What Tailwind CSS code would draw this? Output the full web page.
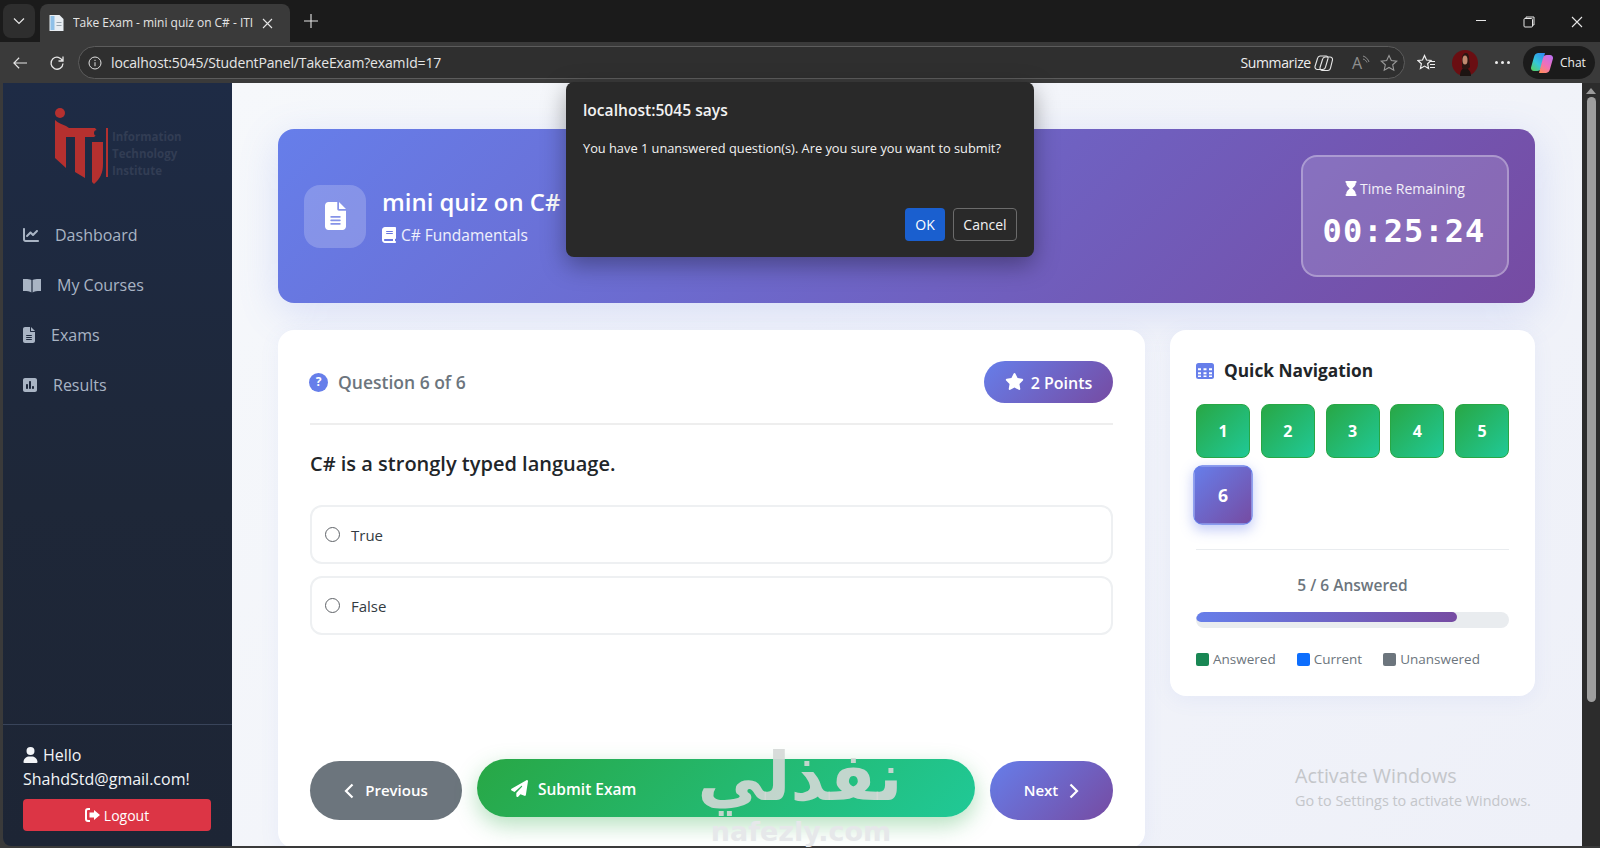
<!DOCTYPE html>
<html lang="en">
<head>
  <meta charset="UTF-8" />
  <title>Take Exam - mini quiz on C# - ITI</title>
  <script src="https://cdn.jsdelivr.net/npm/@tailwindcss/browser@4"></script>
</head>
<body class="h-[848px] w-[1600px] overflow-hidden bg-[#3a3a3a] font-['Open_Sans','Noto_Sans',sans-serif]">
<div class="relative flex h-[848px] flex-col">

  <!-- tab strip -->
  <div class="flex h-[42px] shrink-0 items-end bg-[#1b1b1b] text-[#e6e6e6]">
    <div class="mb-[4px] ml-[3px] flex h-[34px] w-[32px] items-center justify-center rounded-lg bg-[#2e2e2e]">
      <svg width="14" height="14" viewBox="0 0 14 14" fill="none" stroke="#e6e6e6" stroke-width="1.2"><path d="M2 4.500l5 5 5-5"/></svg>
    </div>
    <div class="ml-[5px] flex h-[38px] w-[250px] items-center rounded-t-lg bg-[#3a3a3a] pl-[8px]">
      <svg width="17" height="18" viewBox="0 0 16 18"><path d="M1 1h10l4 4v12H1z" fill="#e8edf2"/><path d="M2 2h4v14H2z" fill="#8fc0e8"/><path d="M8 8h5v1H8zM8 11h5v1H8z" fill="#9aa6b0"/></svg>
      <span class="ml-[8px] w-[186px] truncate text-[12px] tracking-[-0.02px] text-[#e4e4e4]">Take Exam - mini quiz on C# - ITI</span>
      <svg class="ml-[3px]" width="11" height="11" viewBox="0 0 11 11" stroke="#e6e6e6" stroke-width="1.100"><path d="M1 1l9 9M10 1l-9 9"/></svg>
    </div>
    <svg class="mb-[13px] ml-[13px]" width="16" height="16" viewBox="0 0 16 16" stroke="#e6e6e6" stroke-width="1.100"><path d="M8 1v14M1 8h14"/></svg>
    <div class="mb-[14px] ml-auto flex items-center">
      <svg width="12" height="12" viewBox="0 0 12 12" stroke="#e6e6e6" stroke-width="1"><path d="M1 4.500h10"/></svg>
      <svg class="ml-[36px]" width="12" height="12" viewBox="0 0 12 12" fill="none" stroke="#e6e6e6" stroke-width="1"><rect x="1" y="2.500" width="8.500" height="8.500" rx="1"/><path d="M3 2.500V1h8v8H9.500"/></svg>
      <svg class="ml-[36px] mr-[17px]" width="12" height="12" viewBox="0 0 12 12" stroke="#e6e6e6" stroke-width="1.100"><path d="M1 1l10 10M11 1L1 11"/></svg>
    </div>
  </div>

  <!-- toolbar -->
  <div class="flex h-[41px] shrink-0 items-center bg-[#3a3a3a] text-[#e6e6e6]">
    <svg class="ml-[12px]" width="16" height="14" viewBox="0 0 18 16" fill="none" stroke="#e6e6e6" stroke-width="1.300"><path d="M17 8H2M8 2L2 8l6 6"/></svg>
    <svg class="ml-[21px]" width="16" height="16" viewBox="0 0 16 16" fill="none" stroke="#e6e6e6" stroke-width="1.300"><path d="M13.600 6A6 6 0 1 0 14 8.500M14 1.500V6H9.500"/></svg>
    <div class="ml-[13px] flex h-[33px] w-[1327px] items-center rounded-full border border-[#5c5c5c] bg-[#2f2f2f] pl-[9px]">
      <svg width="14" height="14" viewBox="0 0 14 14" fill="none" stroke="#e0e0e0" stroke-width="1"><circle cx="7" cy="7" r="6"/><path d="M7 6.200v4M7 3.800v1.200"/></svg>
      <span class="ml-[9px] text-[14px] tracking-[-0.15px] text-[#e6e6e6]">localhost:5045/StudentPanel/TakeExam?examId=17</span>
      <span class="ml-auto text-[14px] tracking-[-0.35px] text-[#eeeeee]">Summarize</span>
      <svg class="ml-[3px]" width="20" height="18" viewBox="0 0 20 18" fill="none" stroke="#e6e6e6" stroke-width="1.100"><path d="M6 2h6a2 2 0 0 1 2 2.500L11.500 13a3 3 0 0 1-3 2.500H3.500a2.500 2.500 0 0 1-2.500-3L3.500 4.500A3 3 0 0 1 6 2z"/><path d="M11 3h5a2.500 2.500 0 0 1 2.500 3L16.500 14a3 3 0 0 1-3 2.500H8.500a2.500 2.500 0 0 1-2.500-3L8.500 5.500A3 3 0 0 1 11 3z"/></svg>
      <span class="ml-[18px] flex items-start text-[16px] leading-none text-[#8e8e8e]">A<svg width="8" height="10" viewBox="0 0 8 10" fill="none" stroke="#8e8e8e"><path d="M1 1c3 1 5 3 6 6M1 4c2 .5 3 1.500 4 3.500"/></svg></span>
      <svg class="ml-[10px] mr-[6px]" width="18" height="18" viewBox="0 0 18 18" fill="none" stroke="#9a9a9a" stroke-width="1.100"><path d="M9 1.500l2.300 5 5.400.6-4 3.700 1.100 5.400L9 13.500l-4.800 2.700 1.100-5.400-4-3.700 5.400-.6z"/></svg>
    </div>
    <svg class="ml-[12px]" width="19" height="18" viewBox="0 0 19 18" fill="none" stroke="#eeeeee" stroke-width="1.200"><path d="M7.500 1.500l2 4.500 4.500.5-3.400 3.200 1 4.800-4.100-2.400-4.100 2.400 1-4.800L1 6.500 5.500 6zM13 7.500h5M13 10.500h5M13 13.500h5"/></svg>
    <svg class="ml-[16px]" width="26" height="26" viewBox="0 0 26 26">
      <circle cx="13" cy="13" r="13" fill="#6a0e12"/>
      <path d="M8 26c0-5 2-8 5-8s6 3 6 8z" fill="#1c1412"/>
      <path d="M10 8c0-3 2-5 4-5s3 2 3 5l1 9c-2 3-6 3-8 1z" fill="#2a1512"/>
      <ellipse cx="13" cy="10" rx="2.500" ry="4.500" fill="#c08a70"/>
    </svg>
    <div class="ml-[17px] flex gap-[3px]">
      <span class="h-[3px] w-[3px] rounded-full bg-[#eeeeee]"></span><span class="h-[3px] w-[3px] rounded-full bg-[#eeeeee]"></span><span class="h-[3px] w-[3px] rounded-full bg-[#eeeeee]"></span>
    </div>
    <div class="ml-[13px] flex h-[33px] w-[72px] items-center rounded-full bg-[#1b1b1b] pl-[7px]">
      <svg width="24" height="24" viewBox="0 0 24 24">
        <defs>
          <linearGradient id="cpa" x1="0.8" y1="0" x2="0.1" y2="1"><stop offset="0" stop-color="#2f8ff0"/><stop offset="0.55" stop-color="#35c8d8"/><stop offset="1" stop-color="#58d060"/></linearGradient>
          <linearGradient id="cpb" x1="0.8" y1="0" x2="0.2" y2="1"><stop offset="0" stop-color="#c070f0"/><stop offset="0.55" stop-color="#f070b8"/><stop offset="1" stop-color="#ff8a60"/></linearGradient>
        </defs>
        <path d="M8 2h7l-4 15a4 4 0 0 1-4 3H4a3 3 0 0 1-3-3.500L4 6a5 5 0 0 1 4-4z" fill="url(#cpa)"/>
        <path d="M16 22H9l4-15a4 4 0 0 1 4-3h3a3 3 0 0 1 3 3.500L20 18a5 5 0 0 1-4 4z" fill="url(#cpb)"/>
      </svg>
      <span class="ml-[6px] text-[12px] text-[#eeeeee]">Chat</span>
    </div>
  </div>

  <!-- page -->
  <div class="flex h-[763px] shrink-0 pl-[3px]">

    <aside class="flex w-[229px] shrink-0 flex-col rounded-bl-lg bg-[linear-gradient(180deg,#1e2b45_0%,#1e2738_55%,#1d2535_100%)]">
      <div class="flex h-[115px] shrink-0 items-start pl-[47px] pt-[25px]">
        <svg width="60" height="77" viewBox="0 0 60 77" fill="#b5302f">
          <circle cx="10" cy="5" r="5"/>
          <path d="M5 12c3 3 7 4 11 6l3 2h26l4 5-5 4H35l0 41-10-6V29h-9v31L5 50z"/>
          <circle cx="47" cy="25" r="3" fill="#1e2a42"/>
          <path d="M42 34h11v22c0 9-3 15-9 20l-2-2z"/>
          <rect x="56" y="20" width="2" height="49"/>
        </svg>
        <div class="ml-[2px] mt-[20px] text-[11.500px] font-bold leading-[17px] text-[#323d54]">Information<br/>Technology<br/>Institute</div>
      </div>
      <nav class="mt-[12px] flex flex-col text-[16px] text-[#a9b4c4]">
        <a class="flex h-[50px] items-center pl-[20px]">
          <svg width="16" height="16" viewBox="0 0 512 512" fill="#a9b4c4"><path d="M64 64c0-17.700-14.300-32-32-32S0 46.300 0 64V400c0 44.200 35.800 80 80 80H480c17.700 0 32-14.300 32-32s-14.300-32-32-32H80c-8.800 0-16-7.200-16-16V64zm406.600 86.600c12.500-12.500 12.500-32.800 0-45.300s-32.800-12.500-45.300 0L320 210.700l-57.400-57.400c-12.500-12.500-32.800-12.500-45.300 0l-112 112c-12.500 12.500-12.500 32.800 0 45.300s32.800 12.500 45.300 0L240 221.300l57.400 57.400c12.500 12.500 32.800 12.500 45.300 0l128-128z"/></svg>
          <span class="ml-[16px]">Dashboard</span>
        </a>
        <a class="flex h-[50px] items-center pl-[20px]">
          <svg width="18" height="17" viewBox="0 0 18 16" fill="#a9b4c4"><path d="M8.400 2.600v12.400C6.500 13.800 3.500 13.400 0 13.500V1.500c3.500-.2 6.500 0 8.400 1.100zM9.600 2.600v12.400c1.900-1.200 4.900-1.600 8.400-1.500V1.500c-3.500-.2-6.500 0-8.400 1.100z"/></svg>
          <span class="ml-[16px]">My Courses</span>
        </a>
        <a class="flex h-[50px] items-center pl-[20px]">
          <svg width="12" height="16" viewBox="0 0 384 512" fill="#a9b4c4"><path d="M64 0C28.700 0 0 28.700 0 64V448c0 35.300 28.700 64 64 64H320c35.300 0 64-28.700 64-64V160H256c-17.700 0-32-14.300-32-32V0H64zM256 0V128H384L256 0zM112 256H272c8.800 0 16 7.200 16 16s-7.200 16-16 16H112c-8.800 0-16-7.200-16-16s7.200-16 16-16zm0 64H272c8.800 0 16 7.200 16 16s-7.200 16-16 16H112c-8.800 0-16-7.200-16-16s7.200-16 16-16zm0 64H272c8.800 0 16 7.200 16 16s-7.200 16-16 16H112c-8.800 0-16-7.200-16-16s7.200-16 16-16z"/></svg>
          <span class="ml-[16px]">Exams</span>
        </a>
        <a class="flex h-[50px] items-center pl-[20px]">
          <svg width="14" height="16" viewBox="0 0 448 512" fill="#a9b4c4"><path d="M64 32C28.700 32 0 60.700 0 96V416c0 35.300 28.700 64 64 64H384c35.300 0 64-28.700 64-64V96c0-35.300-28.700-64-64-64H64zm64 192c17.700 0 32 14.300 32 32v96c0 17.700-14.300 32-32 32s-32-14.300-32-32V256c0-17.700 14.300-32 32-32zm64-64c0-17.700 14.300-32 32-32s32 14.300 32 32V352c0 17.700-14.300 32-32 32s-32-14.300-32-32V160zM320 288c17.700 0 32 14.300 32 32v32c0 17.700-14.300 32-32 32s-32-14.300-32-32V320c0-17.700 14.300-32 32-32z"/></svg>
          <span class="ml-[16px]">Results</span>
        </a>
      </nav>
      <div class="mt-auto h-[122px] border-t border-[#39445a] pl-[20px] pr-[20px] pt-[17px] text-[16px] text-[#f2f4f7]">
        <div class="flex h-[25px] items-center">
          <svg width="15" height="16" viewBox="0 0 448 512" fill="#f2f4f7"><path d="M224 256A128 128 0 1 0 224 0a128 128 0 1 0 0 256zm-45.700 48C79.800 304 0 383.800 0 482.300C0 498.700 13.300 512 29.700 512H418.300c16.400 0 29.700-13.300 29.700-29.700C448 383.800 368.200 304 269.700 304H178.300z"/></svg>
          <span class="ml-[5px]">Hello</span>
        </div>
        <div class="h-[25px] leading-[25px]">ShahdStd@gmail.com!</div>
        <button class="mt-[7px] flex h-[32px] w-[188px] items-center justify-center rounded-[4px] bg-[#dc3545] text-[14px] text-white">
          <svg width="15" height="14" viewBox="0 0 15 14" fill="#ffffff"><path d="M5 1H3a2 2 0 0 0-2 2v8a2 2 0 0 0 2 2h2" fill="none" stroke="#ffffff" stroke-width="2"/><path d="M9 2l6 5-6 5V9.500H4.500v-5H9z"/></svg>
          <span class="ml-[4px]">Logout</span>
        </button>
      </div>
    </aside>

    <main class="h-[763px] w-[1350px] shrink-0 overflow-hidden bg-[linear-gradient(135deg,#f6f8fb_0%,#eef0f8_100%)] pl-[46px] pt-[46px]">
      <!-- hero -->
      <div class="flex h-[174px] w-[1257px] items-center rounded-[16px] bg-[linear-gradient(135deg,#667eea_0%,#764ba2_100%)] pl-[26px] pr-[26px] shadow-[0_10px_40px_rgba(102,126,234,0.2)]">
        <div class="flex h-[63px] w-[62px] items-center justify-center rounded-[16px] bg-white/20">
          <svg width="21" height="28" viewBox="0 0 384 512" fill="#ffffff"><path d="M64 0C28.700 0 0 28.700 0 64V448c0 35.300 28.700 64 64 64H320c35.300 0 64-28.700 64-64V160H256c-17.700 0-32-14.300-32-32V0H64zM256 0V128H384L256 0zM112 256H272c8.800 0 16 7.200 16 16s-7.200 16-16 16H112c-8.800 0-16-7.200-16-16s7.200-16 16-16zm0 64H272c8.800 0 16 7.200 16 16s-7.200 16-16 16H112c-8.800 0-16-7.200-16-16s7.200-16 16-16zm0 64H272c8.800 0 16 7.200 16 16s-7.200 16-16 16H112c-8.800 0-16-7.200-16-16s7.200-16 16-16z"/></svg>
        </div>
        <div class="ml-[16px] text-white">
          <h1 class="-mt-[1px] text-[23.900px] font-semibold leading-[32px]">mini quiz on C#</h1>
          <div class="mt-[6px] flex items-center text-[15.500px] leading-[22px] text-white/90">
            <svg width="14" height="16" viewBox="0 0 448 512" fill="#ffffff"><path d="M96 0C43 0 0 43 0 96V416c0 53 43 96 96 96H384h32c17.700 0 32-14.300 32-32s-14.300-32-32-32V384c17.700 0 32-14.300 32-32V32c0-17.700-14.300-32-32-32H384 96zm0 384H352v64H96c-17.700 0-32-14.300-32-32s14.300-32 32-32zm32-240c0-8.800 7.200-16 16-16H336c8.800 0 16 7.200 16 16s-7.200 16-16 16H144c-8.800 0-16-7.200-16-16zm16 48H336c8.800 0 16 7.200 16 16s-7.200 16-16 16H144c-8.800 0-16-7.200-16-16s7.200-16 16-16z"/></svg>
            <span class="ml-[5px]">C# Fundamentals</span>
          </div>
        </div>
        <div class="ml-auto flex h-[122px] w-[208px] flex-col items-center justify-center rounded-[16px] border-2 border-white/30 bg-white/15 pb-[4px] text-white">
          <div class="flex items-center text-[14px] text-white/90">
            <svg width="12" height="15" viewBox="0 0 384 512" fill="#ffffff"><path d="M32 0C14.300 0 0 14.300 0 32S14.300 64 32 64V75c0 42.400 16.900 83.100 46.900 113.100L146.700 256 78.900 323.900C48.900 353.900 32 394.600 32 437v11c-17.700 0-32 14.300-32 32s14.300 32 32 32H64 320h32c17.700 0 32-14.300 32-32s-14.300-32-32-32V437c0-42.400-16.900-83.100-46.900-113.100L237.300 256l67.900-67.900c30-30 46.900-70.700 46.900-113.100V64c17.700 0 32-14.300 32-32s-14.300-32-32-32H320 64 32z"/></svg>
            <span class="ml-[3px]">Time Remaining</span>
          </div>
          <div class="mt-[12px] -translate-x-[1px] font-['DejaVu_Sans_Mono','Liberation_Mono',monospace] text-[32px] font-bold leading-[40px] tracking-[1.100px]">00:25:24</div>
        </div>
      </div>

      <div class="mt-[27px] grid grid-cols-[867px_365px] items-start gap-[25px]">
        <!-- question card -->
        <section class="flex h-[518px] flex-col rounded-[16px] bg-white px-[32px] pb-[28px] pt-[31px] shadow-[0_4px_20px_rgba(102,126,234,0.08)]">
          <div class="flex h-[64px] shrink-0 items-start justify-between border-b-2 border-[#eeeeee]">
            <div class="flex h-[42px] items-center text-[17.500px] font-semibold text-[#6c757d]">
              <span class="-ml-[1px] flex h-[19px] w-[19px] items-center justify-center rounded-full bg-[#667eea] text-[12px] font-bold text-white">?</span>
              <span class="ml-[10px]">Question 6 of 6</span>
            </div>
            <div class="flex h-[42px] w-[129px] items-center justify-center rounded-full bg-[linear-gradient(135deg,#667eea_0%,#764ba2_100%)] text-[16px] font-semibold text-white">
              <svg class="-mt-[2px]" width="19" height="17" viewBox="0 0 576 512" fill="#ffffff"><path d="M316.900 18C311.600 7 300.400 0 288.100 0s-23.400 7-28.800 18L195 150.300 51.400 171.500c-12 1.800-22 10.200-25.700 21.700s-.7 24.200 7.900 32.700L137.800 329 113.200 474.700c-2 12 3 24.200 12.900 31.300s23 8 33.800 2.300l128.300-68.500 128.300 68.500c10.800 5.700 23.900 4.900 33.800-2.300s14.900-19.300 12.900-31.300L438.500 329 542.700 225.900c8.600-8.500 11.700-21.200 7.900-32.700s-13.700-19.900-25.700-21.700L381.200 150.300 316.900 18z"/></svg>
              <span class="ml-[7px] mt-[2px]">2 Points</span>
            </div>
          </div>
          <h2 class="mt-[24px] text-[20px] font-semibold leading-[30px] text-[#212529]">C# is a strongly typed language.</h2>
          <div class="mt-[26px] flex flex-col gap-[12px] text-[15px] text-[#333b42]">
            <label class="flex h-[59px] items-center rounded-[12px] border-2 border-[#eef0f2] pl-[13px]">
              <span class="h-[15px] w-[15px] rounded-full border border-[#5f6368]"></span><span class="ml-[11px] mt-[2px]">True</span>
            </label>
            <label class="flex h-[59px] items-center rounded-[12px] border-2 border-[#eef0f2] pl-[13px]">
              <span class="h-[15px] w-[15px] rounded-full border border-[#5f6368]"></span><span class="ml-[11px] mt-[2px]">False</span>
            </label>
          </div>
          <div class="mt-auto flex items-start justify-between">
            <button class="flex h-[59px] w-[152px] items-center justify-center rounded-[30px] bg-[#6c757d] text-[15px] font-semibold text-white">
              <svg width="10" height="16" viewBox="0 0 10 16" fill="none" stroke="#ffffff" stroke-width="2.200"><path d="M8.500 1.500L2 8l6.500 6.500"/></svg>
              <span class="ml-[11px]">Previous</span>
            </button>
            <button class="flex h-[58px] w-[498px] -translate-y-[2px] items-center rounded-[30px] bg-[linear-gradient(135deg,#28a745_0%,#20c997_100%)] pl-[34px] text-[15.500px] font-semibold text-white shadow-[0_8px_22px_rgba(40,167,69,0.35)]">
              <svg width="17" height="17" viewBox="0 0 512 512" fill="#ffffff"><path d="M498.100 5.600c10.100 7 15.400 19.100 13.500 31.200l-64 416c-1.500 9.700-7.400 18.200-16 23s-18.900 5.400-28 1.600L284 427.700l-68.500 74.100c-8.900 9.700-22.900 12.900-35.200 8.100S160 493.200 160 480V396.400c0-4 1.500-7.800 4.200-10.700L331.800 202.800c5.800-6.300 5.600-16-.4-22s-15.700-6.400-22-.7L106 360.800 17.700 316.600C7.100 311.300 .3 300.700 0 288.900s5.900-22.800 16.100-28.700l448-256c10.700-6.100 23.900-5.500 34 1.400z"/></svg>
              <span class="ml-[10px] mt-[3px]">Submit Exam</span>
            </button>
            <button class="flex h-[59px] w-[123px] items-center justify-center rounded-[30px] bg-[linear-gradient(135deg,#667eea_0%,#764ba2_100%)] text-[15px] font-semibold text-white">
              <span class="mr-[11px]">Next</span>
              <svg width="10" height="16" viewBox="0 0 10 16" fill="none" stroke="#ffffff" stroke-width="2.200"><path d="M1.500 1.500L8 8l-6.500 6.500"/></svg>
            </button>
          </div>
        </section>

        <!-- quick navigation -->
        <section class="h-[366px] rounded-[16px] bg-white px-[26px] pt-[28px] shadow-[0_4px_20px_rgba(102,126,234,0.08)]">
          <div class="flex h-[26px] items-center text-[17.300px] font-bold text-[#212529]">
            <svg width="18" height="16" viewBox="0 0 18 16"><rect width="18" height="16" rx="2.500" fill="#667eea"/><path d="M2 5.200h3v2H2zM7.500 5.200h3v2h-3zM13 5.200h3v2h-3zM2 9.200h3v2H2zM7.500 9.200h3v2h-3zM13 9.200h3v2h-3zM2 12.500h3v1.500H2zM7.500 12.500h3v1.500h-3zM13 12.500h3v1.500h-3z" fill="#ffffff"/></svg>
            <span class="ml-[10px]">Quick Navigation</span>
          </div>
          <div class="mt-[20px] grid grid-cols-[repeat(5,54px)] justify-between gap-y-[10px] text-[16px] font-bold text-white">
            <button class="flex h-[54px] items-center justify-center rounded-[8px] border border-[#28a745] bg-[linear-gradient(135deg,#28a745_0%,#20c997_100%)]">1</button>
            <button class="flex h-[54px] items-center justify-center rounded-[8px] border border-[#28a745] bg-[linear-gradient(135deg,#28a745_0%,#20c997_100%)]">2</button>
            <button class="flex h-[54px] items-center justify-center rounded-[8px] border border-[#28a745] bg-[linear-gradient(135deg,#28a745_0%,#20c997_100%)]">3</button>
            <button class="flex h-[54px] items-center justify-center rounded-[8px] border border-[#28a745] bg-[linear-gradient(135deg,#28a745_0%,#20c997_100%)]">4</button>
            <button class="flex h-[54px] items-center justify-center rounded-[8px] border border-[#28a745] bg-[linear-gradient(135deg,#28a745_0%,#20c997_100%)]">5</button>
            <button class="flex h-[54px] scale-110 items-center justify-center rounded-[8px] border border-[#667eea] bg-[linear-gradient(135deg,#667eea_0%,#764ba2_100%)] shadow-[0_4px_12px_rgba(102,126,234,0.4)]">6</button>
          </div>
          <div class="mt-[27px] border-t border-[#e9ecef] pt-[23px]">
            <div class="text-center text-[15.500px] font-semibold leading-[24px] text-[#6c757d]">5 / 6 Answered</div>
            <div class="mt-[15px] h-[16px] overflow-hidden rounded-full bg-[#e9ecef]">
              <div class="h-[10px] rounded-full bg-[linear-gradient(90deg,#667eea_0%,#764ba2_100%)]" style="width: 83.3%"></div>
            </div>
            <div class="mt-[20px] flex text-[13.500px] leading-[22px] text-[#6c757d]">
              <span class="flex items-center"><i class="h-[13px] w-[13px] rounded-[2px] bg-[#198754]"></i><span class="ml-[4px]">Answered</span></span>
              <span class="ml-[21px] flex items-center"><i class="h-[13px] w-[13px] rounded-[2px] bg-[#0d6efd]"></i><span class="ml-[4px]">Current</span></span>
              <span class="ml-[21px] flex items-center"><i class="h-[13px] w-[13px] rounded-[2px] bg-[#6c757d]"></i><span class="ml-[4px]">Unanswered</span></span>
            </div>
          </div>
        </section>
      </div>
    </main>

    <!-- scrollbar -->
    <div class="flex w-[18px] shrink-0 flex-col items-center bg-[#2c2c2c] pt-[5px]">
      <div class="h-0 w-0 border-x-[5px] border-b-[6px] border-x-transparent border-b-[#9a9a9a]"></div>
      <div class="mt-[3px] h-[605px] w-[9px] rounded-full bg-[#9e9e9e]"></div>
    </div>
  </div>

  <!-- browser confirm dialog -->
  <div class="absolute left-[566px] top-[82px] h-[175px] w-[468px] rounded-[8px] bg-[#292929] text-[#f2f2f2] shadow-[0_8px_24px_rgba(0,0,0,0.35)]">
    <div class="pl-[17px] pt-[17px] text-[15.600px] font-semibold leading-[22px]">localhost:5045 says</div>
    <div class="pl-[17px] pt-[17px] text-[12.800px] leading-[20px]">You have 1 unanswered question(s). Are you sure you want to submit?</div>
    <div class="absolute right-[17px] top-[126px] flex gap-[8px] text-[14px]">
      <button class="h-[33px] w-[40px] rounded-[4px] bg-[#1a5fcf] text-white">OK</button>
      <button class="h-[33px] w-[64px] rounded-[4px] border border-[#6b6b6b] text-[#f2f2f2]">Cancel</button>
    </div>
  </div>

  <!-- image watermark -->
  <div class="pointer-events-none absolute left-[680px] top-[732px] w-[240px] text-center font-['DejaVu_Sans',sans-serif] text-[#d4d8d6]/90">
    <div dir="rtl" class="text-[67px] font-bold leading-[90px]">نفذلي</div>
  </div>
  <div class="pointer-events-none absolute left-[696px] top-[817px] w-[210px] text-center font-['DejaVu_Sans',sans-serif] text-[27px] font-bold leading-[30px] text-[#e6e8ea]">nafezly.com</div>

  <!-- windows activation notice -->
  <div class="pointer-events-none absolute left-[1295px] top-[763px] text-[#c4c6ca]">
    <div class="text-[19.700px] leading-[26px]">Activate Windows</div>
    <div class="text-[14.400px] leading-[23px]">Go to Settings to activate Windows.</div>
  </div>
</div>
</body>
</html>
